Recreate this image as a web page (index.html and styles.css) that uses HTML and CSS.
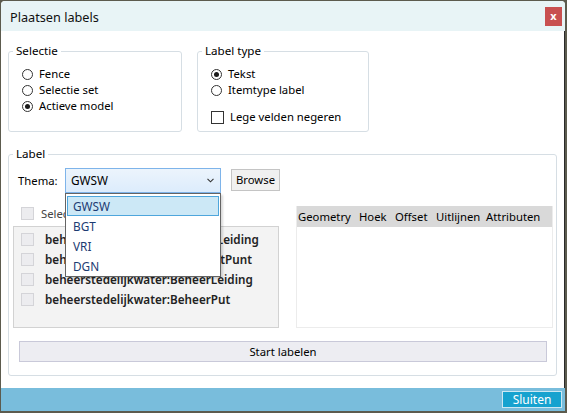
FILE: index.html
```html
<!DOCTYPE html>
<html lang="nl">
<head>
<meta charset="utf-8">
<title>Plaatsen labels</title>
<link rel="stylesheet" href="styles.css">
</head>
<body>
<div class="window">
  <div class="titlebar">
    <span class="title">Plaatsen labels</span>
    <span class="close">x</span>
  </div>
  <div class="content">
    <div class="top-row">
      <fieldset class="group group-selectie">
        <legend>Selectie</legend>
        <div class="group-body body-selectie">
          <div class="opt"><span class="radio"></span>Fence</div>
          <div class="opt"><span class="radio"></span>Selectie set</div>
          <div class="opt"><span class="radio checked"></span>Actieve model</div>
        </div>
      </fieldset>
      <fieldset class="group group-type">
        <legend>Label type</legend>
        <div class="group-body body-type">
          <div class="opt"><span class="radio checked"></span>Tekst</div>
          <div class="opt"><span class="radio"></span>Itemtype label</div>
          <div class="opt opt-check"><span class="check"></span>Lege velden negeren</div>
        </div>
      </fieldset>
    </div>
    <fieldset class="group group-label">
      <legend>Label</legend>
      <div class="group-body body-label">
        <div class="thema-row">
          <span class="thema-label">Thema:</span>
          <div class="combo">
            <span class="combo-text">GWSW</span>
            <svg class="chevron" width="7" height="5" viewBox="0 0 7 5"><path d="M0.5 0.8 L3.5 3.8 L6.5 0.8" fill="none" stroke="#333" stroke-width="1.1"/></svg>
            <div class="dropdown">
              <div class="dd-item selected">GWSW</div>
              <div class="dd-item">BGT</div>
              <div class="dd-item">VRI</div>
              <div class="dd-item">DGN</div>
            </div>
          </div>
          <span class="browse">Browse</span>
        </div>
        <div class="columns">
          <div class="left-col">
            <div class="select-all"><span class="check disabled"></span>Selecteer alles</div>
            <div class="listbox">
              <div class="lb-item"><span class="check disabled"></span>beheerstedelijkwater:AansluitLeiding</div>
              <div class="lb-item"><span class="check disabled"></span>beheerstedelijkwater:OverstortPunt</div>
              <div class="lb-item"><span class="check disabled"></span>beheerstedelijkwater:BeheerLeiding</div>
              <div class="lb-item"><span class="check disabled"></span>beheerstedelijkwater:BeheerPut</div>
            </div>
          </div>
          <div class="table">
            <div class="thead">
              <span class="th th-geo">Geometry</span>
              <span class="th th-hoek">Hoek</span>
              <span class="th th-offset">Offset</span>
              <span class="th th-uit">Uitlijnen</span>
              <span class="th th-attr">Attributen</span>
            </div>
          </div>
        </div>
        <div class="start">Start labelen</div>
      </div>
    </fieldset>
  </div>
  <div class="footer">
    <span class="sluiten">Sluiten</span>
  </div>
</div>
</body>
</html>
```

FILE: styles.css
```css
* { box-sizing: border-box; }

body {
  margin: 0;
  width: 567px;
  height: 413px;
  overflow: hidden;
  background: #5c5b4e;
  font-family: "Noto Sans", "Open Sans", sans-serif;
  font-size: 11.3px;
  color: #000;
}

.window {
  margin: 1px 0 0 1px;
  width: 564px;
  height: 410px;
  display: flex;
  flex-direction: column;
  background: #fff;
  border-radius: 4px 4px 0 0;
  overflow: hidden;
}

.titlebar {
  flex: none;
  height: 30px;
  background: #e8f4f6;
  display: flex;
  align-items: center;
  justify-content: space-between;
  padding: 1px 3px 0 9px;
}

.title {
  font-size: 12.7px;
  color: #111;
}

.close {
  width: 17px;
  height: 19px;
  background: #c85050;
  color: #fff;
  font-weight: bold;
  font-size: 11px;
  line-height: 17px;
  text-align: center;
}

.content {
  flex: 1;
  padding: 12px 7px 0 7px;
  border-right: 1px solid #2a2a2a;
  display: flex;
  flex-direction: column;
}

.top-row {
  display: flex;
  gap: 15px;
}

.group {
  margin: 0;
  padding: 0;
  min-width: 0;
  border: 1px solid #d6dee4;
  border-radius: 3px;
}

.group legend {
  margin-left: 4px;
  padding: 0 3px;
  line-height: 16px;
  font-size: 11.6px;
  color: #000;
}

.group-selectie { width: 174px; }
.group-type { width: 172px; }

.body-selectie { padding: 7px 0 0 13px; }
.body-type { padding: 7px 0 6px 13px; }

.opt {
  display: flex;
  align-items: center;
  height: 16px;
  line-height: 16px;
}

.opt-check { margin-top: 11px; }

.radio {
  width: 11px;
  height: 11px;
  border: 1px solid #333;
  border-radius: 50%;
  background: #fff;
  margin-right: 6px;
  display: flex;
  align-items: center;
  justify-content: center;
}

.radio.checked::after {
  content: "";
  width: 5px;
  height: 5px;
  border-radius: 50%;
  background: #1a1a1a;
}

.check {
  width: 13px;
  height: 13px;
  border: 1px solid #333;
  background: #fff;
  margin-right: 6px;
  flex: none;
}

.check.disabled {
  border-color: #d4d4d8;
  background: #ececef;
}

.group-label { margin-top: 14px; }

.body-label { padding: 6px 3px 13px 4px; }

.thema-row {
  display: flex;
  align-items: center;
  height: 24px;
}

.thema-label {
  width: 47px;
  margin-left: 5px;
}

.combo {
  position: relative;
  width: 156px;
  height: 25px;
  border: 1px solid #7eb4ea;
  background: linear-gradient(#ecf4fc, #dcecfc);
  display: flex;
  align-items: center;
  justify-content: space-between;
  padding: 0 6px 0 5px;
  font-size: 11.8px;
}

.dropdown {
  position: absolute;
  left: -1px;
  top: 24px;
  width: 156px;
  height: 84px;
  background: #fff;
  border: 1px solid #646464;
  padding: 2px 1px;
  box-shadow: 2px 2px 2px rgba(0, 0, 0, 0.15);
  z-index: 5;
}

.dd-item {
  height: 20px;
  line-height: 18px;
  padding-left: 5px;
  border: 1px solid transparent;
  color: #1c3b72;
}

.dd-item.selected {
  background: #cce8f6;
  border-color: #4ea6dc;
}

.browse {
  margin-left: 10px;
  width: 49px;
  height: 22px;
  line-height: 20px;
  text-align: center;
  background: #f0f0f0;
  border: 1px solid #c4c4c4;
}

.columns {
  margin-top: 12px;
  display: flex;
  gap: 17px;
}

.left-col {
  width: 266px;
  display: flex;
  flex-direction: column;
}

.select-all {
  display: flex;
  align-items: center;
  height: 18px;
  padding-left: 8px;
  color: #444;
}

.select-all .check { margin-right: 7px; }

.listbox {
  margin-top: 4px;
  height: 102px;
  border: 1px solid #d2d2d2;
  background: #f3f3f3;
  padding: 2px 0 0 7px;
}

.lb-item {
  display: flex;
  align-items: center;
  height: 20px;
  font-size: 11.7px;
  font-weight: 600;
  color: #222;
  white-space: nowrap;
}

.lb-item .check { margin-right: 11px; }

.table {
  margin-top: 2px;
  width: 257px;
  height: 122px;
  border: 1px solid #ececec;
  border-top: 0;
}

.thead {
  display: flex;
  height: 21px;
  background: #d9d9d9;
  align-items: center;
}

.th { white-space: nowrap; }
.th-geo { width: 62px; padding-left: 1px; }
.th-hoek { width: 36px; }
.th-offset { width: 41px; }
.th-uit { width: 50px; }
.th-attr { flex: 1; }

.start {
  margin: 13px 6px 0 6px;
  height: 21px;
  line-height: 19px;
  text-align: center;
  background: #ededf2;
  border: 1px solid #c9c9d9;
}

.footer {
  flex: none;
  height: 23px;
  background: #79bddc;
  display: flex;
  justify-content: flex-end;
  padding: 3px 3px 0 0;
}

.sluiten {
  width: 60px;
  height: 17px;
  line-height: 15px;
  font-size: 12px;
  text-align: center;
  color: #fff;
  background: #16a2cf;
  border: 1px solid #cde8f3;
}
```
